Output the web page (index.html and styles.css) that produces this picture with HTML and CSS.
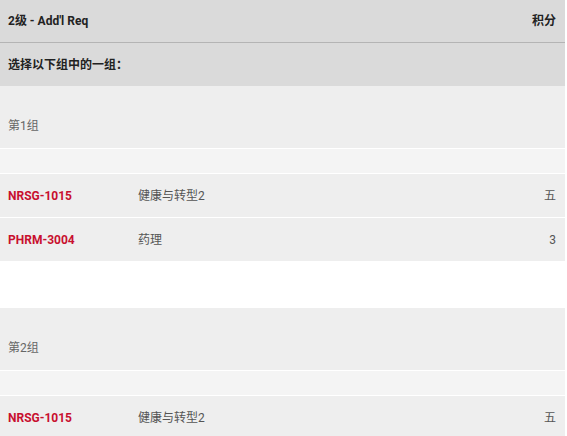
FILE: index.html
```html
<!DOCTYPE html>
<html lang="zh">
<head>
<meta charset="utf-8">
<link rel="stylesheet" href="styles.css">
</head>
<body>
<div class="req">
  <div class="hdr">
    <span>2级 - Add'l Req</span>
    <span>积分</span>
  </div>
  <div class="instr">选择以下组中的一组：</div>

  <div class="group">
    <div class="glabel">第1组</div>
    <div class="spacer"></div>
    <div class="course">
      <span class="code">NRSG-1015</span>
      <span class="title">健康与转型2</span>
      <span class="cred">五</span>
    </div>
    <div class="course">
      <span class="code">PHRM-3004</span>
      <span class="title">药理</span>
      <span class="cred">3</span>
    </div>
  </div>

  <div class="group">
    <div class="glabel">第2组</div>
    <div class="spacer"></div>
    <div class="course">
      <span class="code">NRSG-1015</span>
      <span class="title">健康与转型2</span>
      <span class="cred">五</span>
    </div>
  </div>
</div>
</body>
</html>
```
FILE: styles.css
```css
html, body {
  margin: 0;
  padding: 0;
  background: #ffffff;
}
body {
  font-family: Roboto, "Noto Sans CJK SC", sans-serif;
  font-size: 12px;
  line-height: 16px;
}
.req {
  width: 565px;
}
.hdr {
  box-sizing: border-box;
  height: 43px;
  border-bottom: 1px solid #b4b4b4;
  background: #dadada;
  display: flex;
  align-items: center;
  justify-content: space-between;
  padding: 0 9px 0 8px;
  font-weight: bold;
  color: #222;
}
.instr {
  height: 43px;
  background: #dadada;
  display: flex;
  align-items: center;
  padding: 0 8px;
  font-weight: bold;
  color: #222;
}
.group {
  display: flex;
  flex-direction: column;
  gap: 1px;
  margin-bottom: 47px;
}
.glabel {
  height: 62px;
  box-sizing: border-box;
  padding: 32px 8px 0;
  background: #eeeeee;
  color: #666;
}
.spacer {
  height: 24px;
  background: #f4f4f4;
}
.course {
  height: 43px;
  background: #eeeeee;
  display: flex;
  align-items: center;
  padding: 0 9px 0 8px;
  color: #555;
}
.code {
  width: 130px;
  color: #c8102e;
  font-weight: bold;
}
.title {
  flex: 1;
}
.cred {
  text-align: right;
}
```
